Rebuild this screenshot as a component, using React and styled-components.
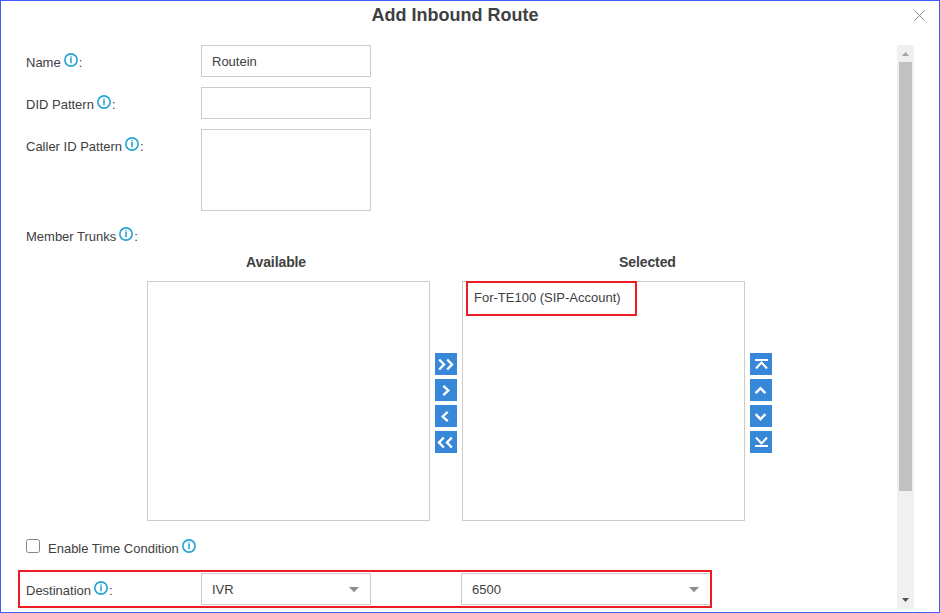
import React from "react";
import styled, { createGlobalStyle, css } from "styled-components";

const GlobalStyle = createGlobalStyle`
  * { box-sizing: border-box; }
  body {
    margin: 0;
    background: #fff;
    color: #404040;
    font: 13px/18px "Liberation Sans", Arial, sans-serif;
  }
`;

const Dialog = styled.main`
  width: 940px;
  height: 613px;
  border: 1px solid #405cff;
  display: flex;
  flex-direction: column;
  overflow: hidden;
`;

const Header = styled.header`
  flex: 0 0 44px;
  display: grid;
  grid-template-columns: 40px 1fr 40px;
`;

const Title = styled.h1`
  grid-column: 2;
  margin: 3px 0 0 -30px;
  text-align: center;
  font-size: 18px;
  line-height: 22px;
`;

const CloseButton = styled.button`
  width: 11px;
  height: 11px;
  margin: 9px 0 0 15px;
  padding: 0;
  border: 0;
  background: none;
  svg { display: block; }
`;

const Body = styled.div`
  flex: 1;
  display: flex;
  min-height: 0;
`;

const Form = styled.form`
  width: 896px;
  display: flex;
  flex-direction: column;
`;

const Row = styled.div`
  display: flex;
  align-items: flex-start;
  padding-left: 25px;
  margin-bottom: ${(p) => (p.$tight ? "8px" : "10px")};
`;

const Label = styled.label`
  width: 175px;
  height: 18px;
  margin-top: 9px;
  display: flex;
  white-space: nowrap;
`;

const InfoSvg = styled.svg`
  flex: none;
  width: 14px;
  height: 14px;
  margin: -1px 1px 0 3px;
`;

const fieldBox = css`
  border: 1px solid #ccc;
  border-radius: 0;
  background: #fff;
  color: #404040;
  font: inherit;
  outline: 0;
`;

const TextInput = styled.input`
  ${fieldBox}
  display: block;
  width: 170px;
  height: 32px;
  padding: 0 10px;
`;

const TextArea = styled.textarea`
  ${fieldBox}
  display: block;
  width: 170px;
  height: 82px;
  resize: none;
`;

const TrunkSection = styled.section`
  display: grid;
  grid-template-columns: 283px 22px 283px 22px;
  grid-template-rows: 28px 240px;
  column-gap: 5px;
  padding-left: 146px;
  margin-top: -3px;
`;

const ListTitle = styled.h2`
  grid-row: 1;
  grid-column: ${(p) => p.$column};
  margin: 0;
  padding-left: ${(p) => p.$indent};
  font-size: 14px;
  line-height: 18px;
  letter-spacing: -0.1px;
`;

const ListBox = styled.div`
  ${fieldBox}
  grid-row: 2;
  padding-left: 3px;
`;

const TrunkItem = styled.div`
  width: 171px;
  height: 35px;
  margin-top: -1px;
  border: 2px solid #ed1c24;
  padding: 6px 0 0 6px;
  white-space: nowrap;
`;

const Controls = styled.div`
  grid-row: 2;
  display: flex;
  flex-direction: column;
  gap: 4px;
  padding-top: 72px;
`;

const MoveButton = styled.button`
  width: 22px;
  height: 22px;
  padding: 0;
  border: 0;
  background: #3788d8;
  svg { display: block; }
`;

const ConditionRow = styled.div`
  display: flex;
  padding-left: 25px;
  height: 20px;
  margin-top: 18px;
`;

const Checkbox = styled.input`
  appearance: none;
  width: 14px;
  height: 14px;
  margin: 0 8px 0 0;
  border: 1px solid #858585;
  border-radius: 2.5px;
`;

const ConditionLabel = styled.label`
  display: flex;
  height: 18px;
  margin-top: 1px;
  white-space: nowrap;
`;

const Destination = styled.div`
  display: flex;
  width: 694px;
  height: 38px;
  margin: 11px 0 0 17px;
  border: 2px solid #ed1c24;
  padding: 1px 0 0 6px;
`;

const Select = styled.button`
  ${fieldBox}
  width: ${(p) => p.$width};
  flex: none;
  height: 32px;
  margin-right: ${(p) => p.$gap || "0"};
  padding: 2px 11px 0 10px;
  border-right-width: ${(p) => (p.$flush ? "0" : "1px")};
  display: flex;
  align-items: center;
  justify-content: space-between;
`;

const ScrollTrack = styled.div`
  width: 17px;
  height: 564px;
  background: #f0f0f0;
  display: flex;
  flex-direction: column;
  align-items: center;
`;

const ScrollThumb = styled.div`
  width: 13px;
  height: 429px;
  background: #c1c1c1;
`;

const ScrollEnd = styled.div`
  width: 17px;
  height: 17px;
  margin-top: ${(p) => (p.$last ? "auto" : "0")};
  svg { display: block; }
`;

const InfoIcon = () => (
  <InfoSvg viewBox="0 0 14 14" fill="none">
    <circle cx="7" cy="7" r="6.15" stroke="#20a4d4" strokeWidth="1.6" />
    <path d="M7 3.2v1.3M7 5v5.3" stroke="#38acd6" strokeWidth="1.7" />
  </InfoSvg>
);

const glyphs = {
  allRight: "M4.2 6.5 9 11.5 4.2 16.5M12.2 6.5 17 11.5 12.2 16.5",
  right: "M8.3 6.8 13.3 11.5 8.3 16.2",
  left: "M12.7 6.8 7.7 11.5 12.7 16.2",
  allLeft: "M8.8 6.5 4 11.5 8.8 16.5M16.8 6.5 12 11.5 16.8 16.5",
  top: "M5 7H18M6 15.5 11.5 9.5 17 15.5",
  up: "M5.6 14.2 10.5 9.2 15.4 14.2",
  down: "M5.6 9.2 10.5 14.2 15.4 9.2",
  bottom: "M5 15H18M6 6.5 11.5 12.5 17 6.5",
};

const Move = ({ kind }) => (
  <MoveButton type="button" aria-label={kind}>
    <svg
      width="22"
      height="22"
      fill="none"
      stroke="#fff"
      strokeWidth={kind === "top" || kind === "bottom" ? 2 : 2.4}
    >
      <path d={glyphs[kind]} />
    </svg>
  </MoveButton>
);

const Caret = () => (
  <svg width="10" height="6" fill="#8c8c8c">
    <path d="M0 0h10L5 5.3z" />
  </svg>
);

const FieldLabel = ({ children }) => (
  <Label>
    {children}
    <InfoIcon />:
  </Label>
);

export default function App() {
  return (
    <>
      <GlobalStyle />
      <Dialog>
        <Header>
          <Title>Add Inbound Route</Title>
          <CloseButton aria-label="Close">
            <svg width="11" height="11" stroke="#888" strokeWidth="1">
              <path d="M.5.5l10 10M10.5.5l-10 10" />
            </svg>
          </CloseButton>
        </Header>
        <Body>
          <Form>
            <Row>
              <FieldLabel>Name</FieldLabel>
              <TextInput defaultValue="Routein" />
            </Row>
            <Row>
              <FieldLabel>DID Pattern</FieldLabel>
              <TextInput />
            </Row>
            <Row $tight>
              <FieldLabel>Caller ID Pattern</FieldLabel>
              <TextArea />
            </Row>
            <Row>
              <FieldLabel>Member Trunks</FieldLabel>
            </Row>
            <TrunkSection>
              <ListTitle $column={1} $indent="99px">Available</ListTitle>
              <ListTitle $column={3} $indent="157px">Selected</ListTitle>
              <ListBox />
              <Controls>
                <Move kind="allRight" />
                <Move kind="right" />
                <Move kind="left" />
                <Move kind="allLeft" />
              </Controls>
              <ListBox>
                <TrunkItem>For-TE100 (SIP-Account)</TrunkItem>
              </ListBox>
              <Controls>
                <Move kind="top" />
                <Move kind="up" />
                <Move kind="down" />
                <Move kind="bottom" />
              </Controls>
            </TrunkSection>
            <ConditionRow>
              <Checkbox type="checkbox" id="time" />
              <ConditionLabel htmlFor="time">
                Enable Time Condition
                <InfoIcon />
              </ConditionLabel>
            </ConditionRow>
            <Destination>
              <FieldLabel>Destination</FieldLabel>
              <Select type="button" $width="170px" $gap="90px">
                IVR
                <Caret />
              </Select>
              <Select type="button" $width="249px" $flush>
                6500
                <Caret />
              </Select>
            </Destination>
          </Form>
          <ScrollTrack>
            <ScrollEnd>
              <svg width="17" height="17" fill="#a3a3a3">
                <path d="M5 11h7L8.5 7z" />
              </svg>
            </ScrollEnd>
            <ScrollThumb />
            <ScrollEnd $last>
              <svg width="17" height="17" fill="#505050">
                <path d="M5 6h7L8.5 10z" />
              </svg>
            </ScrollEnd>
          </ScrollTrack>
        </Body>
      </Dialog>
    </>
  );
}
